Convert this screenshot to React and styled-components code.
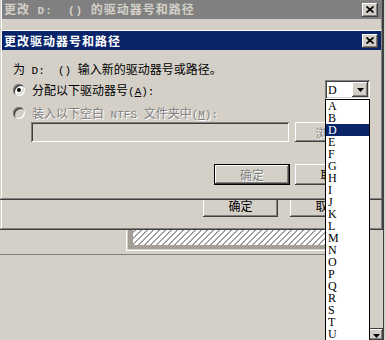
import React from "react";
import styled, { createGlobalStyle, css } from "styled-components";

const LETTERS = ["A", "B", "D", "E", "F", "G", "H", "I", "J", "K", "L", "M", "N", "O", "P", "Q", "R", "S", "T", "U"];

const raised = css`
  background: #d4d0c8;
  box-shadow: inset -1px -1px #404040, inset 1px 1px #ffffff,
    inset -2px -2px #808080, inset 2px 2px #d4d0c8;
`;

const sunken = css`
  box-shadow: inset 1px 1px #808080, inset -1px -1px #ffffff,
    inset 2px 2px #404040, inset -2px -2px #d4d0c8;
`;

const disabledText = css`
  color: #808080;
  text-shadow: 1px 1px #ffffff;
`;

function CloseGlyph() {
  return (
    <svg width="8" height="7" viewBox="0 0 8 7">
      <path d="M0.5 0.5 L7.5 6.5 M7.5 0.5 L0.5 6.5" stroke="#000" strokeWidth="1.7" />
    </svg>
  );
}

function DownGlyph() {
  return (
    <svg width="7" height="4" viewBox="0 0 7 4">
      <polygon points="0,0 7,0 3.5,4" fill="#000" />
    </svg>
  );
}

export default function App() {
  return (
    <>
      <GlobalStyle />
      <Desktop>
        <DiskWindow>
          <DiskMain>
            <DiskRow>
              <VolumeCell>
                <VolumeBox />
              </VolumeCell>
            </DiskRow>
          </DiskMain>
          <Scrollbar>
            <ScrollArrow>
              <DownGlyph />
            </ScrollArrow>
          </Scrollbar>
        </DiskWindow>

        <Window $top={-2} $height={232}>
          <TitleBar>
            <TitleText>
              更改<Latin>{" D:  () "}</Latin>的驱动器号和路径
            </TitleText>
            <CloseButton>
              <CloseGlyph />
            </CloseButton>
          </TitleBar>
          <BackBody>
            <Button $h={23} $w={75}>确定</Button>
            <Button $h={23} $w={75}>取消</Button>
          </BackBody>
        </Window>

        <Window $top={29}>
          <TitleBar $active>
            <TitleText>更改驱动器号和路径</TitleText>
            <CloseButton>
              <CloseGlyph />
            </CloseButton>
          </TitleBar>
          <DialogBody>
            <Line>
              为<Latin>{" D:  () "}</Latin>输入新的驱动器号或路径。
            </Line>
            <OptionRow $mt={4} $h={19}>
              <Radio $checked />
              <Line>
                分配以下驱动器号<Latin>(<u>A</u>):</Latin>
              </Line>
              <Combo>
                <ComboValue>D</ComboValue>
                <ComboButton>
                  <DownGlyph />
                </ComboButton>
                <DropList>
                  {LETTERS.map((l) => (
                    <DropItem key={l} $selected={l === "D"}>
                      {l}
                    </DropItem>
                  ))}
                </DropList>
              </Combo>
            </OptionRow>
            <OptionRow $mt={7} $h={14}>
              <Radio $disabled />
              <Line $disabled>
                装入以下空白<Latin>{" NTFS "}</Latin>文件夹中<Latin>(<u>M</u>):</Latin>
              </Line>
            </OptionRow>
            <PathRow>
              <TextBox />
              <Button $h={20} $w={75} $disabled>
                浏览...
              </Button>
            </PathRow>
            <ButtonRow>
              <Button $h={21} $w={76} $default $disabled>
                确定
              </Button>
              <Button $h={21} $w={75}>取消</Button>
            </ButtonRow>
          </DialogBody>
        </Window>
      </Desktop>
    </>
  );
}

const GlobalStyle = createGlobalStyle`
  html, body {
    margin: 0;
    padding: 0;
    background: #d4d0c8;
  }
  body {
    font-family: "Noto Sans CJK SC", "Liberation Sans", sans-serif;
    font-size: 12px;
  }
  * {
    box-sizing: border-box;
  }
`;

const Desktop = styled.div`
  position: relative;
  width: 386px;
  height: 340px;
  overflow: hidden;
  background: #d4d0c8;
`;

const DiskWindow = styled.div`
  display: flex;
  height: 100%;
`;

const DiskMain = styled.div`
  flex: 1;
`;

const DiskRow = styled.div`
  height: 255px;
  display: flex;
  align-items: flex-end;
  padding-left: 126px;
  border-bottom: 1px solid #808080;
`;

const VolumeCell = styled.div`
  flex: 1;
  margin-bottom: 3px;
  padding: 0 0 1px 1px;
  border-left: 1px solid #ffffff;
  border-bottom: 1px solid #ffffff;
`;

const VolumeBox = styled.div`
  height: 70px;
  border-style: solid;
  border-color: #a39e96;
  border-width: 5px 0 4px 5px;
  background: repeating-linear-gradient(
    135deg,
    #a0a0a0 0 1px,
    #ffffff 1px 4.24px
  );
`;

const Scrollbar = styled.div`
  width: 15px;
  margin-right: 2px;
  border-right: 1px solid #404040;
  display: flex;
  flex-direction: column;
  justify-content: flex-end;
`;

const ScrollArrow = styled.div`
  ${raised};
  height: 12px;
  border-top: 1px solid #404040;
  display: flex;
  justify-content: center;
  padding-top: 5px;
`;

const Window = styled.div`
  position: absolute;
  left: 0;
  top: ${({ $top }) => $top}px;
  width: 383px;
  height: ${({ $height }) => ($height ? `${$height}px` : "auto")};
  padding: 2px;
  display: flex;
  flex-direction: column;
  background: #d4d0c8;
  box-shadow: inset -1px -1px #404040, inset 1px 1px #d4d0c8,
    inset -2px -2px #808080, inset 2px 2px #ffffff;
`;

const TitleBar = styled.div`
  height: 19px;
  display: flex;
  align-items: center;
  padding: 0 3px 0 2px;
  background: ${({ $active }) => ($active ? "#0a246a" : "#808080")};
  color: ${({ $active }) => ($active ? "#ffffff" : "#d4d0c8")};
`;

const TitleText = styled.span`
  font-weight: bold;
  font-size: 12px;
  letter-spacing: 1px;
  line-height: 14px;
  white-space: pre;
`;

const Latin = styled.span`
  font-family: "Liberation Mono", monospace;
  font-size: 11px;
  white-space: pre;
`;

const CloseButton = styled.div`
  ${raised};
  margin-left: auto;
  width: 16px;
  height: 14px;
  display: flex;
  align-items: center;
  justify-content: center;
`;

const BackBody = styled.div`
  flex: 1;
  display: flex;
  align-items: flex-end;
  justify-content: flex-end;
  gap: 12px;
  padding: 0 16px 11px 0;
`;

const DialogBody = styled.div`
  display: flex;
  flex-direction: column;
  padding: 12px 11px 13px 11px;
`;

const Line = styled.div`
  height: 14px;
  line-height: 14px;
  white-space: pre;
  color: #000000;
  ${({ $disabled }) => $disabled && disabledText};

  u {
    text-decoration: underline;
  }
`;

const OptionRow = styled.div`
  display: flex;
  align-items: center;
  gap: 7px;
  height: ${({ $h }) => $h}px;
  margin-top: ${({ $mt }) => $mt}px;
`;

const Radio = styled.div`
  position: relative;
  flex: none;
  width: 12px;
  height: 12px;
  border-radius: 50%;
  background: ${({ $disabled }) => ($disabled ? "#d4d0c8" : "#ffffff")};
  box-shadow: inset 1px 1px #808080, inset -1px -1px #ffffff,
    inset 2px 2px #404040, inset -2px -2px #d4d0c8;

  &::after {
    content: "";
    display: ${({ $checked }) => ($checked ? "block" : "none")};
    position: absolute;
    left: 4px;
    top: 4px;
    width: 4px;
    height: 4px;
    border-radius: 50%;
    background: #000000;
  }
`;

const Combo = styled.div`
  position: relative;
  margin-left: auto;
  width: 45px;
  height: 19px;
  padding: 2px;
  display: flex;
  align-items: center;
  background: #ffffff;
  ${sunken};
`;

const ComboValue = styled.span`
  flex: 1;
  padding-left: 1px;
  font-family: "Liberation Serif", serif;
  font-size: 12px;
  line-height: 14px;
`;

const ComboButton = styled.div`
  ${raised};
  width: 16px;
  height: 15px;
  display: flex;
  align-items: center;
  justify-content: center;
`;

const DropList = styled.div`
  position: absolute;
  left: 0;
  top: 100%;
  width: 45px;
  border: 1px solid #000000;
  background: #ffffff;
  z-index: 5;
`;

const DropItem = styled.div`
  height: 12px;
  line-height: 12px;
  padding-left: 2px;
  font-family: "Liberation Serif", serif;
  font-size: 12px;
  overflow: hidden;
  background: ${({ $selected }) => ($selected ? "#0a246a" : "#ffffff")};
  color: ${({ $selected }) => ($selected ? "#ffffff" : "#000000")};
`;

const PathRow = styled.div`
  display: flex;
  gap: 6px;
  margin-top: 2px;
  padding-left: 18px;
`;

const TextBox = styled.div`
  width: 258px;
  height: 20px;
  background: #d4d0c8;
  ${sunken};
`;

const ButtonRow = styled.div`
  display: flex;
  justify-content: flex-end;
  gap: 5px;
  margin-top: 22px;
`;

const Button = styled.div`
  ${raised};
  width: ${({ $w }) => $w}px;
  height: ${({ $h }) => $h}px;
  display: flex;
  align-items: center;
  justify-content: center;
  font-size: 12px;
  color: #000000;
  white-space: nowrap;
  ${({ $disabled }) => $disabled && disabledText};
  ${({ $default }) =>
    $default &&
    css`
      border: 1px solid #000000;
    `};
`;
